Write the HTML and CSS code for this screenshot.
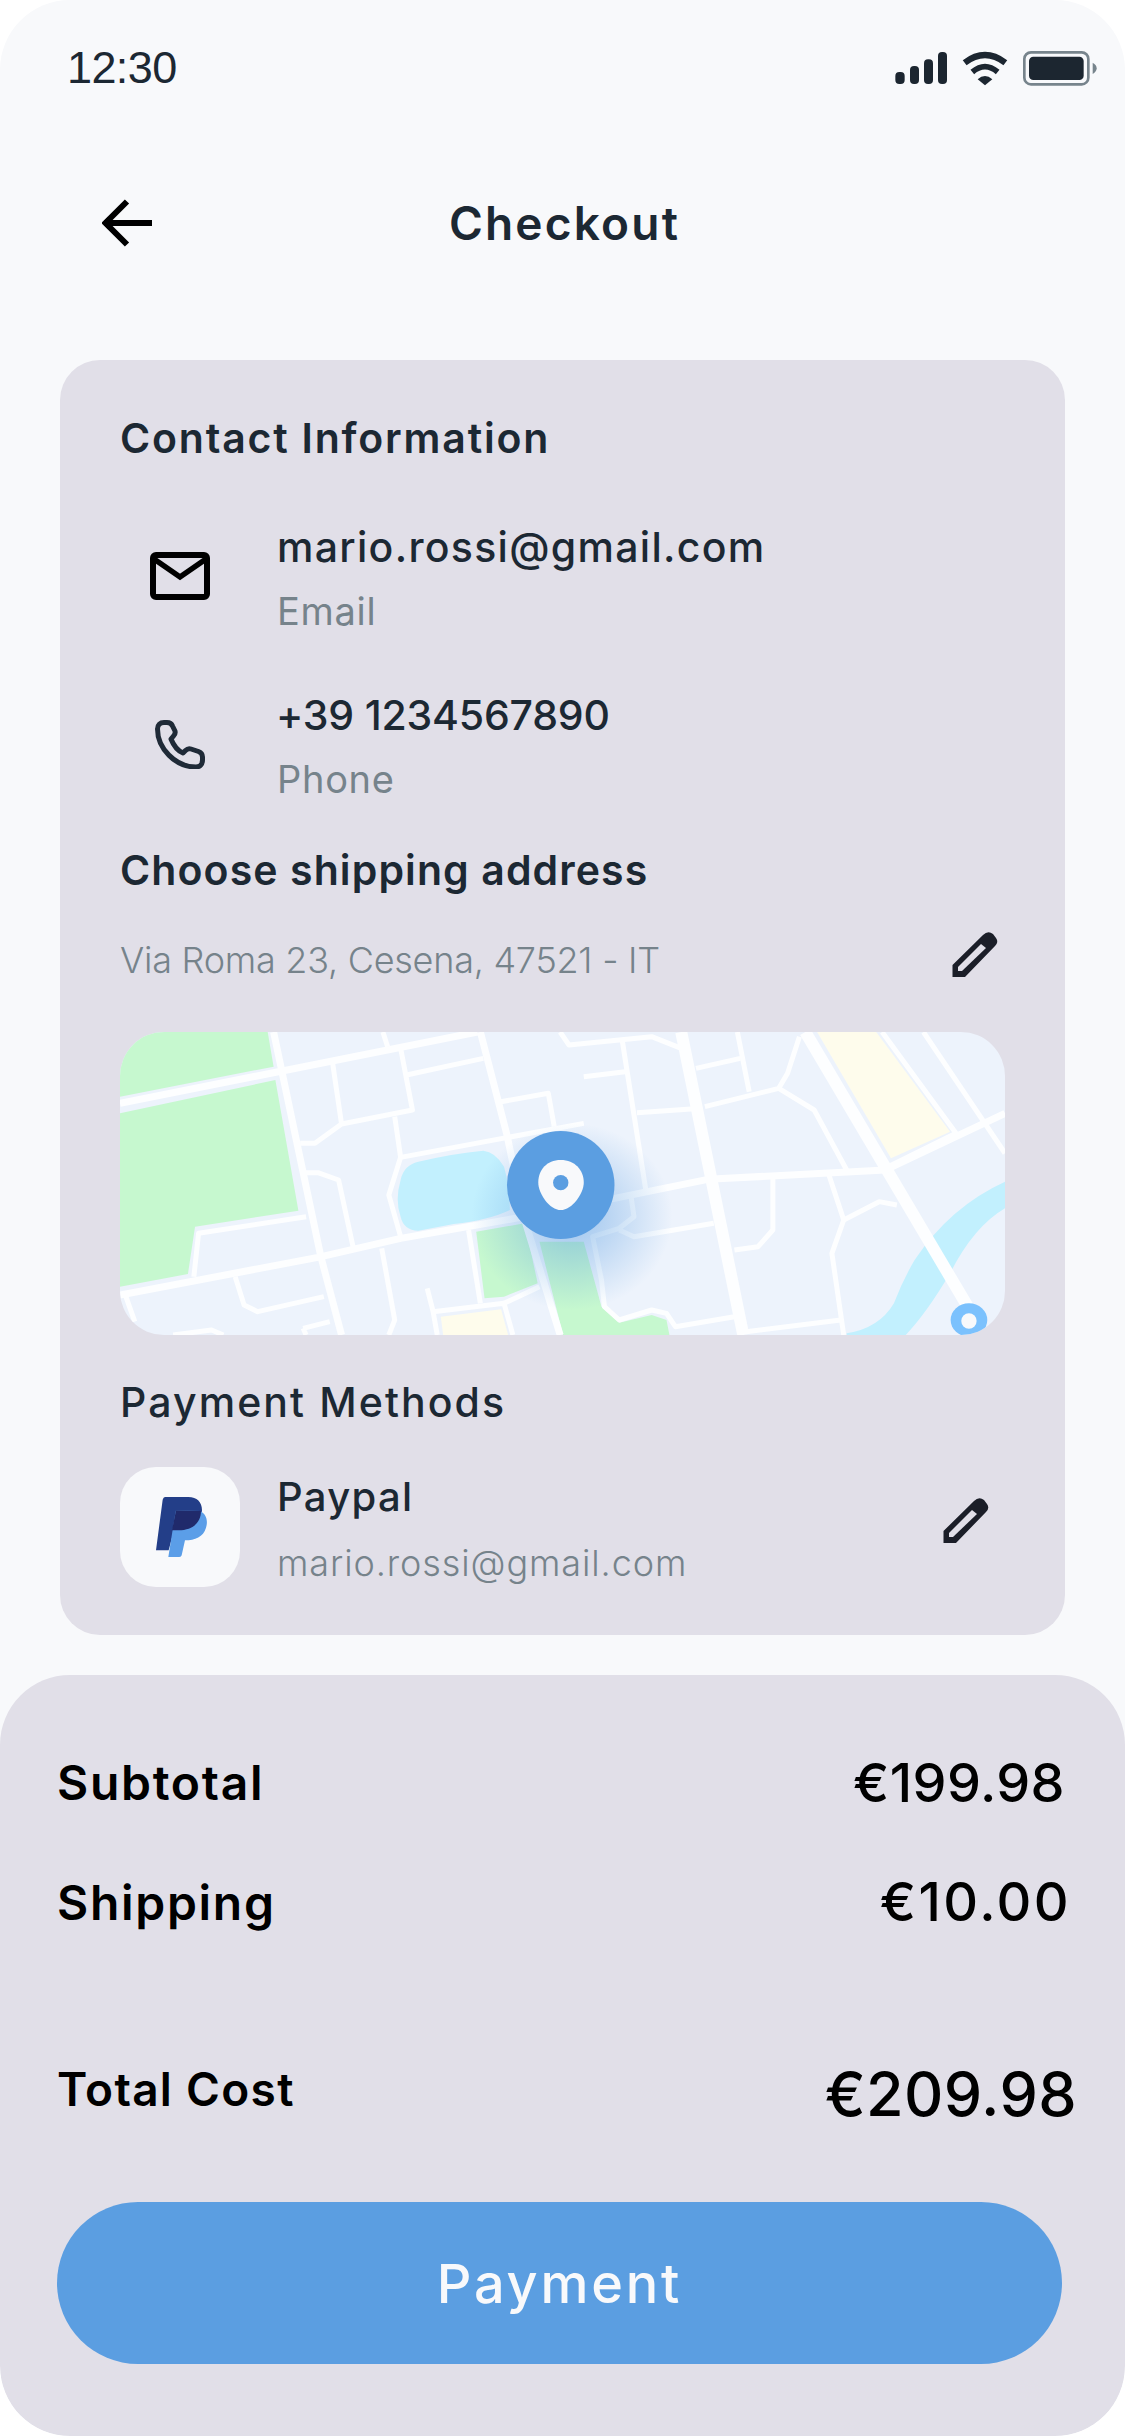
FILE: index.html
```html
<!DOCTYPE html>
<html lang="en">
<head>
<meta charset="utf-8">
<title>Checkout</title>
<link rel="stylesheet" href="styles.css">
</head>
<body>
<div class="screen">
  <div class="status">
    <span class="time">12:30</span>
    <svg class="status-icons" viewBox="0 0 660 180">
      <rect x="46" y="96" width="28" height="36" rx="12" fill="#1c2630"/>
      <rect x="90" y="78" width="27" height="54" rx="12" fill="#1c2630"/>
      <rect x="132" y="58" width="27" height="74" rx="12" fill="#1c2630"/>
      <rect x="174" y="36" width="27" height="96" rx="12" fill="#1c2630"/>
      <path d="M254 68Q315 22 376 68" fill="none" stroke="#1c2630" stroke-width="19"/>
      <path d="M277 96Q315 64 353 96" fill="none" stroke="#1c2630" stroke-width="17"/>
      <path d="M293 118Q315 98 337 118L315 136Z" fill="#1c2630"/>
      <rect x="433" y="37" width="192" height="96" rx="20" fill="none" stroke="#77848c" stroke-width="8"/>
      <rect x="447" y="50" width="164" height="70" rx="13" fill="#1c2630"/>
      <path d="M638 68Q650 75 650 85Q650 95 638 102Z" fill="#77848c"/>
    </svg>
  </div>
  <header class="topbar">
    <svg class="back" viewBox="0 0 50 50"><path d="M50 25H5M25 3.500L3.500 25L25 46.500" fill="none" stroke="#000" stroke-width="6"/></svg>
    <h1 class="title">Checkout</h1>
  </header>
  <section class="card">
    <h2 class="heading contact-heading">Contact Information</h2>
    <div class="contact">
      <svg class="contact-icon" viewBox="0 0 60 48"><rect x="3" y="3" width="54" height="42" rx="3" fill="none" stroke="#000" stroke-width="6"/><path d="M4 7L30 25L56 7" fill="none" stroke="#000" stroke-width="5.500"/></svg>
      <div class="contact-text"><div class="value">mario.rossi@gmail.com</div><div class="label">Email</div></div>
    </div>
    <div class="contact second">
      <svg class="contact-icon" viewBox="-5 -1 60 50"><path d="M9 2.500C5 2.500 2.500 5 2.500 9C2.500 28 20 47 41 47C45 47 47.500 44 47.500 40V37C47.500 34.500 46 32.500 43.500 31.500L36 29C34 28.300 32 29 30.500 30.500L28 33C21 30 18 24 16 19L18.500 16C20 14.500 20.500 13 20 11L17.500 6C16.500 3.500 14.500 2.500 12 2.500Z" fill="none" stroke="#1f2a37" stroke-width="5" stroke-linejoin="round"/></svg>
      <div class="contact-text"><div class="value phone">+39 1234567890</div><div class="label">Phone</div></div>
    </div>
    <h2 class="heading shipping">Choose shipping address</h2>
    <div class="address">
      <span class="address-text">Via Roma 23, Cesena, 47521 - IT</span>
      <svg class="edit edit-address" viewBox="0 0 50 50"><path d="M2.500 35L33 5Q38 0 43 4L46 8Q49 12 45 16L15 47H2.500Z" fill="#1b1e28"/><path d="M8 41V37L31 14L36 18L12 41Z" fill="#e1dfe8"/></svg>
    </div>
    <svg class="map" viewBox="35 36 1498 909" preserveAspectRatio="none">
      <defs>
        <radialGradient id="glow" gradientUnits="userSpaceOnUse" cx="800" cy="590" r="170" gradientTransform="translate(800 590) scale(1 1.65) translate(-800 -590)">
          <stop offset="0" stop-color="#5b9ee1" stop-opacity=".55"/>
          <stop offset="1" stop-color="#5b9ee1" stop-opacity="0"/>
        </radialGradient>
        <clipPath id="mapclip"><rect x="35" y="36" width="1498" height="909"/></clipPath>
      </defs>
      <g clip-path="url(#mapclip)">
      <rect x="35" y="36" width="1498" height="909" fill="#edf3fc"/>
      <path class="park" d="M35 36H285L295 140L35 230Z"/>
      <path class="park" d="M35 280L298 180L337 572L162 620L150 762L35 800Z"/>
      <path class="park" d="M638 635L720 610L742 790L685 830L652 835Z"/>
      <path class="park" d="M745 665H820L850 860L880 908L935 885L960 900L965 945H785Z"/>
      <path class="sand" d="M1215 36H1315L1440 335L1340 415Z"/>
      <path class="sand" d="M578 890L680 868L692 945H582Z"/>
      <path class="water" d="M540 425Q600 400 650 392Q670 395 685 440Q695 500 695 570Q660 600 600 612L540 632Q515 630 510 590Q500 540 510 480Q515 435 540 425Z"/>
      <path class="water" d="M1533 485Q1440 560 1380 720Q1360 780 1345 850Q1320 925 1265 940V945H1365Q1400 880 1440 760Q1480 620 1533 565Z"/>
      <g class="road thick">
        <path d="M1195 36L1470 860"/>
        <path d="M985 36L1090 945"/>
      </g>
      <g class="road mid">
        <path d="M35 250L640 36"/>
        <path d="M35 825L370 712L510 655L720 590L1030 478"/>
        <path d="M295 36L375 710L410 945"/>
        <path d="M645 36L690 345L720 600L780 945"/>
        <path d="M1030 478L1330 450L1533 280"/>
      </g>
      <g class="road thin">
        <path d="M480 36L488 80"/>
        <path d="M510 85L530 270L410 312L365 370H340"/>
        <path d="M395 130L410 312"/>
        <path d="M520 165L650 115"/>
        <path d="M680 245L760 220L770 320"/>
        <path d="M510 412L820 310"/>
        <path d="M500 290L510 412L490 525L510 650"/>
        <path d="M345 458H370L405 480L430 685"/>
        <path d="M350 590L168 640L160 770"/>
        <path d="M478 685L500 900L490 945"/>
        <path d="M625 630L645 850"/>
        <path d="M555 805L565 875L572 945"/>
        <path d="M565 875L685 850L700 945"/>
        <path d="M685 850L745 800"/>
        <path d="M230 770L245 855L268 875L380 830"/>
        <path d="M345 925L390 905M345 925L350 945"/>
        <path d="M125 945L190 930L210 945"/>
        <path d="M45 830L60 905"/>
        <path d="M780 36L795 75L935 50L985 85"/>
        <path d="M885 60L925 510"/>
        <path d="M820 170L890 155"/>
        <path d="M1010 145L1085 115"/>
        <path d="M1080 36L1100 215"/>
        <path d="M1025 260L1150 205L1165 160L1185 50"/>
        <path d="M1150 205L1210 270L1265 450"/>
        <path d="M910 278L1020 265"/>
        <path d="M900 530L905 590L880 625L835 650L850 780L855 860L880 900L935 870L960 880L975 920L1075 890"/>
        <path d="M880 630L905 650L1040 610"/>
        <path d="M1140 475V630L1115 680L1075 690"/>
        <path d="M1235 465L1260 600L1240 700L1260 945"/>
        <path d="M1260 600L1320 545L1350 555"/>
        <path d="M1095 935L1255 900"/>
        <path d="M1325 36L1450 340L1335 440"/>
        <path d="M1395 36L1533 400"/>
      </g>
      <ellipse cx="800" cy="590" rx="170" ry="280" fill="url(#glow)"/>
      <ellipse cx="781" cy="495" rx="91" ry="162" fill="#5b9ee1"/>
      <path d="M781 420C805 420 820 450 820 488C820 520 800 570 781 570C762 570 743 520 743 488C743 450 757 420 781 420Z" fill="#f8f9fb"/>
      <ellipse cx="781" cy="488" rx="13" ry="23" fill="#5b9ee1"/>
      <ellipse cx="1472" cy="900" rx="31" ry="50" fill="#7bc1fd"/>
      <ellipse cx="1472" cy="903" rx="13" ry="23" fill="#f8f9fb"/>
      </g>
    </svg>
    <h2 class="heading payment">Payment Methods</h2>
    <div class="method">
      <div class="logo">
        <svg class="logo-svg" viewBox="60 80 360 360">
          <path d="M195 170H265C295 170 310 190 305 220C298 255 270 270 235 270H222L206 330H168L188 178Q190 170 195 170Z" fill="#233e88"/>
          <path d="M228 210L300 212C318 220 325 240 318 262C310 290 285 300 255 300L245 345Q244 350 238 350H205L226 218Z" fill="#5b9ee8"/>
          <path d="M228 210L303 212C303 245 280 270 235 270H216Z" fill="#202a6b"/>
        </svg>
      </div>
      <div class="method-text"><div class="value method-name">Paypal</div><div class="label method-mail">mario.rossi@gmail.com</div></div>
      <svg class="edit edit-method" viewBox="0 0 50 50"><path d="M2.500 35L33 5Q38 0 43 4L46 8Q49 12 45 16L15 47H2.500Z" fill="#1b1e28"/><path d="M8 41V37L31 14L36 18L12 41Z" fill="#e1dfe8"/></svg>
    </div>
  </section>
  <section class="sheet">
    <div class="row"><span class="row-label">Subtotal</span><span class="row-value v1">€199.98</span></div>
    <div class="row r2"><span class="row-label">Shipping</span><span class="row-value v2">€10.00</span></div>
    <div class="row total"><span class="row-label">Total Cost</span><span class="row-value big">€209.98</span></div>
    <button class="pay">Payment</button>
  </section>
</div>
</body>
</html>
```
FILE: styles.css
```css
* { box-sizing: border-box; }
html, body { margin: 0; padding: 0; background: #fff; }
body { width: 1125px; height: 2436px; font-family: Inter, "Open Sans", sans-serif; color: #1c2833; }
.screen { width: 1125px; height: 2436px; background: #f8f9fb; border-radius: 70px; overflow: hidden; display: flex; flex-direction: column; }
.status { height: 136px; display: flex; align-items: center; justify-content: space-between; padding: 0 25px 0 67px; }
.time { font-family: "Liberation Sans", sans-serif; font-size: 45px; letter-spacing: -.6px; color: #1c2833; }
.status-icons { width: 220px; height: 60px; margin-top: 4px; }
.topbar { height: 174px; display: grid; grid-template-columns: 1fr auto 1fr; align-items: center; padding-left: 102px; padding-right: 98px; }
.back { width: 50px; height: 50px; }
.title { margin: 0; font-size: 46px; line-height: 56px; font-weight: 600; letter-spacing: 2.2px; }
.card { margin: 50px 60px 0; height: 1275px; background: #e1dfe8; border-radius: 40px; padding: 50px 60px 48px; display: flex; flex-direction: column; }
.heading { margin: 0; font-size: 41px; line-height: 56px; font-weight: 600; letter-spacing: 1.1px; }
.heading.contact-heading { letter-spacing: 1.8px; }
.contact { display: flex; align-items: center; margin-top: 53px; }
.contact.second { margin-top: 48px; }
.contact-icon { width: 60px; height: 50px; margin-left: 30px; margin-bottom: 6px; flex: none; }
.contact-text { margin-left: 67px; }
.value { font-size: 41px; line-height: 56px; font-weight: 500; letter-spacing: 1.3px; }
.value.phone { letter-spacing: -.2px; margin-left: -1px; }
.label { font-size: 38px; line-height: 56px; margin-top: 8px; color: #76838b; font-weight: 400; letter-spacing: .7px; }
.heading.shipping { margin-top: 35px; }
.address { display: flex; align-items: center; justify-content: space-between; margin-top: 34px; height: 56px; padding-right: 5px; }
.address-text { font-size: 36px; font-weight: 300; color: #76838b; letter-spacing: -.25px; }
.edit { width: 50px; height: 50px; flex: none; }
.edit-address { margin-bottom: 10px; }
.edit-method { margin-bottom: 12px; }
.map { display: block; width: 885px; height: 303px; margin-top: 44px; border-radius: 44px; flex: none; }
.park { fill: #c6f8cf; }
.sand { fill: #fefcec; }
.water { fill: #c2f0fe; }
.road path { fill: none; stroke: #fdfeff; stroke-linejoin: round; vector-effect: non-scaling-stroke; }
.thick path { stroke-width: 12px; }
.mid path { stroke-width: 7px; }
.thin path { stroke-width: 5px; }
.heading.payment { margin-top: 39px; font-weight: 500; letter-spacing: 2.1px; }
.method { display: flex; align-items: center; margin-top: 37px; height: 120px; padding-right: 14px; }
.logo { width: 120px; height: 120px; border-radius: 36px; background: #f8f9fb; flex: none; }
.logo-svg { display: block; width: 120px; height: 120px; }
.method-text { margin-left: 37px; flex: 1; padding-top: 6px; }
.method-name { font-size: 40px; }
.method-mail { margin-top: 10px; font-size: 36px; font-weight: 300; letter-spacing: .9px; }
.sheet { margin-top: 40px; height: 761px; background: #e1dfe8; border-radius: 70px; padding: 80px 50px 0 57px; display: flex; flex-direction: column; }
.row { display: flex; justify-content: space-between; align-items: flex-start; color: #000; }
.row.r2 { margin-top: 64px; }
.row.total { margin-top: 131px; }
.row-label { font-size: 48px; line-height: 56px; font-weight: 600; letter-spacing: 1.7px; }
.total .row-label { font-size: 46px; letter-spacing: 1.3px; margin-top: -1px; }
.row-value { font-size: 54px; line-height: 56px; font-weight: 500; letter-spacing: .4px; }
.row-value.v1 { margin-right: 10px; }
.row-value.v2 { margin-right: 4px; letter-spacing: 2.4px; margin-top: -1px; }
.row-value.big { font-size: 61px; line-height: 64px; margin-right: -2px; }
.pay { display: block; width: 1005px; height: 162px; margin-top: 76px; border: 0; border-radius: 81px; background: #5b9ee1; color: #f8f9fb; font-family: inherit; font-size: 54px; font-weight: 500; letter-spacing: 2.8px; }
```
